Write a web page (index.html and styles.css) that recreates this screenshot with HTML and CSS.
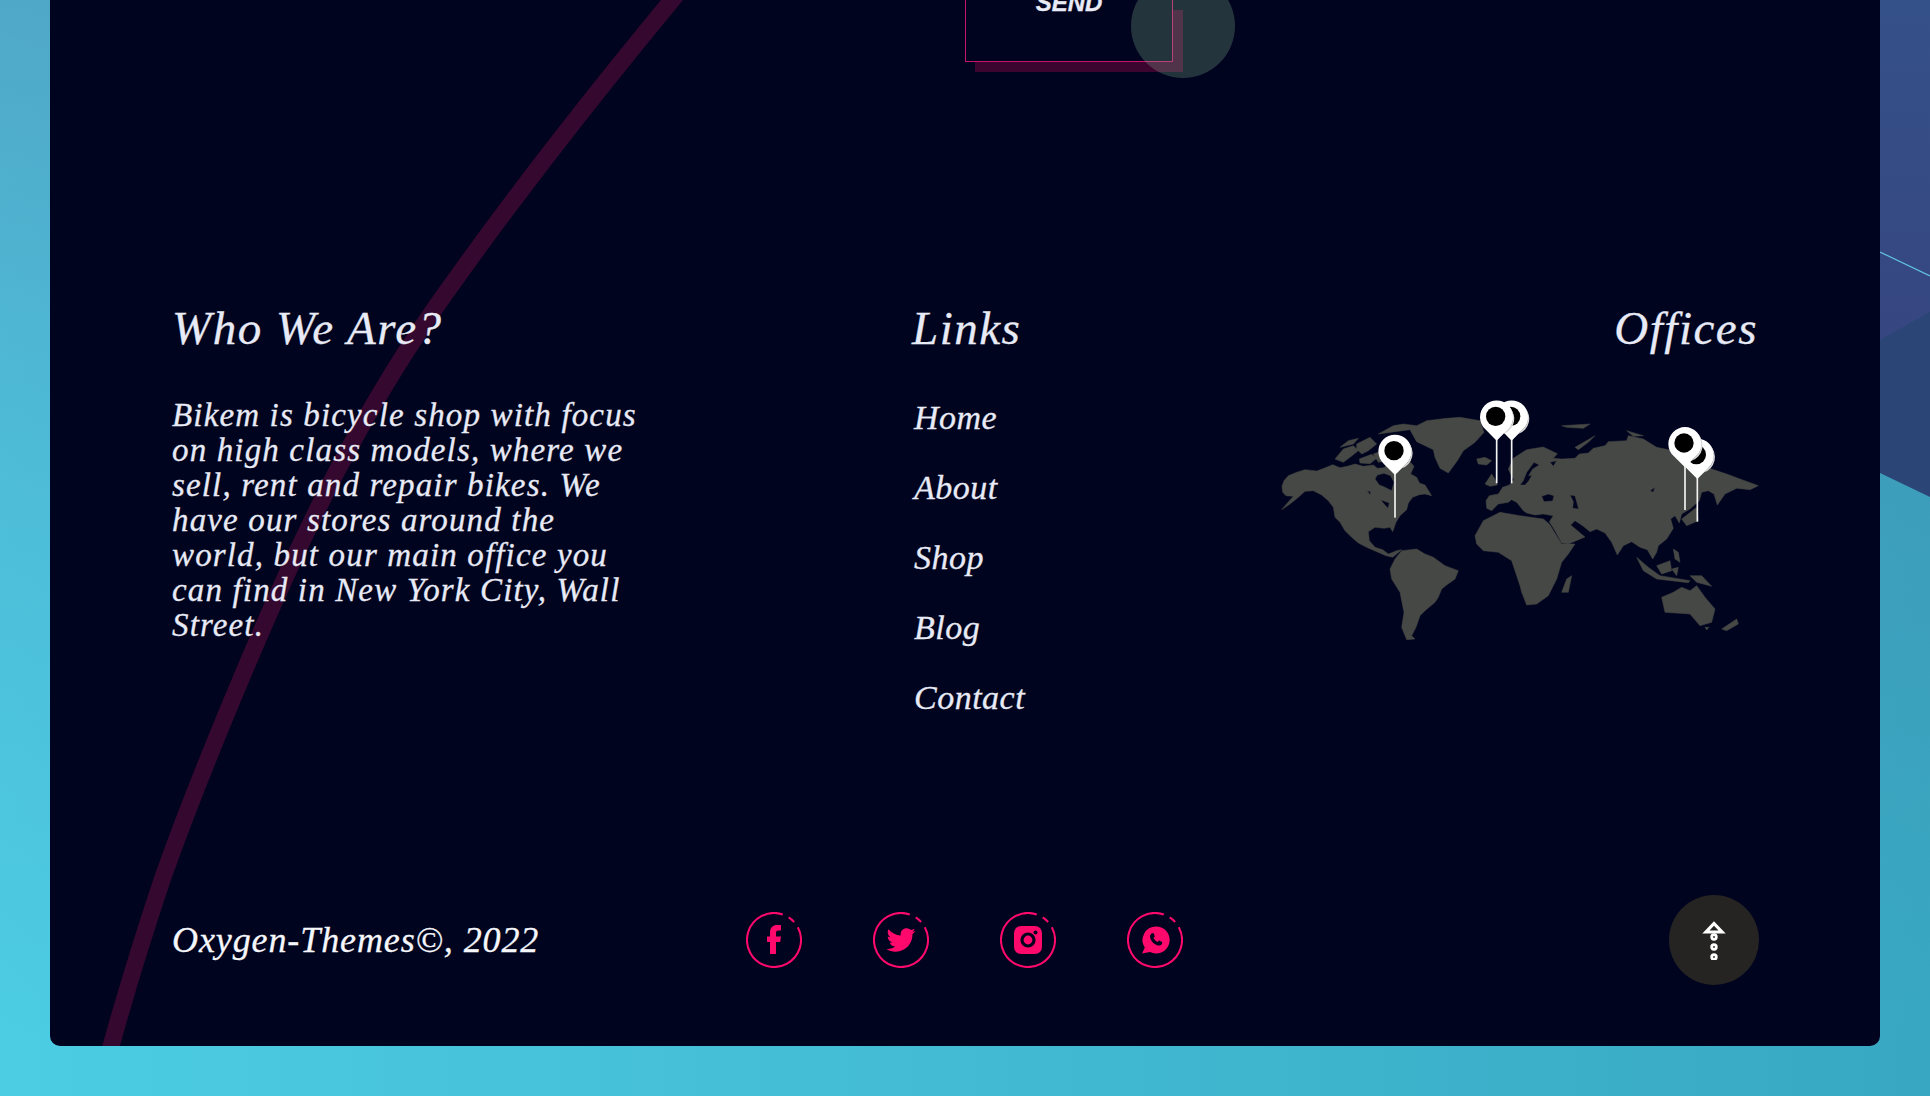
FILE: index.html
```html
<!DOCTYPE html>
<html lang="en">
<head>
<meta charset="utf-8">
<title>Bikem</title>
<link rel="stylesheet" href="styles.css">
</head>
<body>
<svg class="backdrop" viewBox="0 0 50 540" aria-hidden="true">
  <defs>
    <linearGradient id="sky" x1="0" y1="0" x2="0" y2="1">
      <stop offset="0" stop-color="#355189"/>
      <stop offset="1" stop-color="#364680"/>
    </linearGradient>
  </defs>
  <polygon points="0,0 50,0 50,340 0,340" fill="url(#sky)"/>
  <polygon points="0,340 50,312 50,497 0,473" fill="#2b4676"/>
  <line x1="0" y1="252" x2="50" y2="276" stroke="#62c4e4" stroke-width="1.2"/>
</svg>
<main class="card">
  <svg class="arc" viewBox="0 0 1830 1046" aria-hidden="true">
    <path d="M640 -22L622 0C560 75 480 175 405 280C310 410 250 540 199 660C165 740 135 815 112 880C92 940 75 995 60 1050" fill="none" stroke="#35092f" stroke-width="17"/>
  </svg>
  <div class="send-row">
    <button class="send" type="button"><span class="send-label">SEND</span><span class="send-ripple"></span></button>
  </div>
  <section class="columns">
    <div class="col-about">
      <h2 class="heading">Who We Are?</h2>
      <p class="about-text">Bikem is bicycle shop with focus<br>on high class models, where we<br>sell, rent and repair bikes. We<br>have our stores around the<br>world, but our main office you<br>can find in New York City, Wall<br>Street.</p>
    </div>
    <nav class="col-links">
      <h2 class="heading">Links</h2>
      <ul class="link-list">
        <li><a href="#">Home</a></li>
        <li><a href="#">About</a></li>
        <li><a href="#">Shop</a></li>
        <li><a href="#">Blog</a></li>
        <li><a href="#">Contact</a></li>
      </ul>
    </nav>
    <div class="col-offices">
      <h2 class="heading">Offices</h2>
      <svg class="map" viewBox="0 0 1560 840" role="img" aria-label="World map with office pins">
        <defs>
          <g id="pin">
            <rect x="-2.5" y="60" width="5" height="138" fill="#f2f2f2"/>
            <path d="M0 70L-34 36A50 50 0 1 1 34 36Z" fill="#fff"/>
            <path d="M38 -30A50 50 0 0 1 34 36L20 50A48 48 0 0 0 38 -30Z" fill="#d9d9d9"/>
            <circle cx="-3" cy="-3" r="29" fill="#000"/>
          </g>
        </defs>
        <g class="land">
          <path fill-rule="evenodd" d="M66 322L72 305L85 290L110 280L135 272L170 276L192 268L218 257L240 266L262 262L285 255L310 262L340 258L352 268L372 266L385 252L405 262L425 258L450 248L462 262L452 285L470 295L478 312L495 318L515 350L495 345L478 347L458 355L445 372L440 392L420 410L408 430L398 458L390 445L372 448L345 445L325 458L328 485L345 505L368 512L385 525L410 515L425 512L410 525L398 535L378 530L350 518L320 505L295 492L275 475L255 455L240 430L225 415L220 385L205 365L185 348L160 335L135 337L115 355L90 375L65 392L88 365L100 352L78 350L68 340ZM345 300L358 318L375 325L395 335L402 310L392 290L372 283L352 288ZM362 362L388 372L384 388L372 375ZM322 335L332 338L330 348Z"/>
          <path d="M425 515L470 510L495 525L520 535L555 560L595 575L585 600L560 618L545 630L535 655L525 670L495 695L480 710L468 745L455 770L465 780L440 782L425 745L432 700L425 665L420 640L395 600L390 570L405 540Z"/>
          <path d="M355 165L400 140L430 135L470 140L500 125L560 118L600 115L660 125L672 160L645 190L610 215L592 245L565 282L540 268L525 235L520 212L470 188L450 152L405 158Z"/>
          <path d="M225 240L250 210L280 200L295 215L270 235L250 250ZM290 195L330 175L350 195L325 215L305 225L290 210ZM298 240L335 226L350 238L330 254L300 252ZM340 225L375 212L400 225L450 245L420 254L385 246L355 250ZM240 205L265 185L295 178L280 195Z"/>
          <path d="M650 240L675 235L695 245L680 258L655 255ZM675 315L695 285L705 300L712 318L690 322Z"/>
          <path fill-rule="evenodd" d="M680 388L678 365L688 350L715 345L728 325L748 318L762 302L752 285L745 270L760 238L800 212L850 204L892 224L880 238L905 240L945 238L958 225L985 222L1000 208L1035 200L1045 188L1100 185L1105 170L1150 180L1190 205L1240 215L1285 232L1330 262L1400 285L1440 300L1495 320L1470 332L1430 328L1395 345L1372 378L1362 345L1345 335L1325 340L1318 365L1290 390L1265 405L1258 432L1245 410L1232 420L1240 448L1220 480L1195 500L1190 520L1178 540L1162 512L1140 505L1115 488L1090 500L1072 528L1055 490L1035 462L1010 450L990 458L968 440L945 425L932 438L975 474L925 495L905 492L885 455L868 428L880 410L850 405L825 408L800 402L790 395L770 370L755 362L745 370L715 375L695 395ZM845 352L865 345L882 350L878 366L852 368ZM930 348L945 350L956 390L938 388L940 368ZM822 250L800 280L790 305L780 318L795 318L806 306L816 288L806 290L818 270L838 258ZM870 250L890 245L880 262ZM1170 335L1185 325L1180 340Z"/>
          <path d="M645 470L670 425L720 400L780 410L850 420L868 435L905 495L945 495L925 525L905 550L890 600L865 650L830 675L800 678L785 640L780 620L755 545L715 520L670 515L650 495Z"/>
          <path d="M920 600L935 590L925 640L905 640Z"/>
          <path d="M1205 655L1240 640L1265 625L1290 635L1310 620L1335 655L1365 690L1355 730L1320 740L1290 705L1215 700Z"/>
          <path d="M1385 750L1430 720L1435 735L1400 755ZM1335 745L1347 745L1340 753Z"/>
          <path d="M1130 535L1165 565L1200 590L1290 605L1285 611L1190 600L1150 575ZM1190 560L1230 545L1235 575L1205 585ZM1240 510L1255 520L1260 550L1245 540ZM1290 590L1325 590L1355 622L1310 610ZM1235 570L1255 565L1250 590Z"/>
          <path d="M1265 420L1310 385L1315 425L1280 440ZM905 140L990 135L970 148L920 145ZM1100 155L1150 170L1120 172ZM945 205L1005 170L985 190L955 212Z"/>
        </g>
        <use href="#pin" x="405" y="218"/>
        <use href="#pin" x="755" y="115"/>
        <use href="#pin" x="710" y="115"/>
        <use href="#pin" x="1312" y="230"/>
        <use href="#pin" x="1275" y="195"/>
      </svg>
    </div>
  </section>
  <footer class="bottom">
    <p class="copyright">Oxygen-Themes©, 2022</p>
    <div class="socials">
      <a class="social" href="#" aria-label="Facebook">
        <svg viewBox="0 0 56 56"><circle class="ring" cx="28" cy="28" r="27" pathLength="360"/><path class="glyph" d="M24 42V30H21V24.500H24V20.500C24 15.500 27 13 31 13H35V18.500H32.500C30.700 18.500 30 19.300 30 21V24.500H35L34.200 30H30V42Z"/></svg>
      </a>
      <a class="social" href="#" aria-label="Twitter">
        <svg viewBox="0 0 56 56"><circle class="ring" cx="28" cy="28" r="27" pathLength="360"/><g transform="translate(13.500 13.500) scale(.0565)"><path class="glyph" d="M459.37 151.716c.325 4.548.325 9.097.325 13.645 0 138.72-105.583 298.558-298.558 298.558-59.452 0-114.68-17.219-161.137-47.106 8.447.974 16.568 1.299 25.34 1.299 49.055 0 94.213-16.568 130.274-44.832-46.132-.975-84.792-31.188-98.112-72.772 6.498.974 12.995 1.624 19.818 1.624 9.421 0 18.843-1.3 27.614-3.573-48.081-9.747-84.143-51.98-84.143-102.985v-1.299c13.969 7.797 30.214 12.67 47.431 13.319-28.264-18.843-46.781-51.005-46.781-87.391 0-19.492 5.197-37.36 14.294-52.954 51.655 63.675 129.3 105.258 216.365 109.807-1.624-7.797-2.599-15.918-2.599-24.04 0-57.828 46.782-104.934 104.934-104.934 30.213 0 57.502 12.67 76.67 33.137 23.715-4.548 46.456-13.32 66.599-25.34-7.798 24.366-24.366 44.833-46.132 57.827 21.117-2.273 41.584-8.122 60.426-16.243-14.292 20.791-32.161 39.308-52.628 54.253z"/></g></svg>
      </a>
      <a class="social" href="#" aria-label="Instagram">
        <svg viewBox="0 0 56 56"><circle class="ring" cx="28" cy="28" r="27" pathLength="360"/><rect class="glyph" x="14" y="14" width="28" height="28" rx="7"/><circle class="hole-ring" cx="28" cy="28" r="6"/><circle class="hole" cx="35.500" cy="20.500" r="2"/></svg>
      </a>
      <a class="social" href="#" aria-label="WhatsApp">
        <svg viewBox="0 0 56 56"><circle class="ring" cx="28" cy="28" r="27" pathLength="360"/><path class="glyph" d="M29 14.500A13.500 13.500 0 1 1 23 40L15 41.500L17.800 35.500A13.500 13.500 0 0 1 29 14.500Z"/><path class="hole" d="M24.500 21.500L26.500 21C27 22 27.800 24 27.800 24.500L26.500 26C27.300 27.700 28.800 29.200 30.500 30L32 28.600C32.700 28.800 34.500 29.700 35.300 30.300L34.800 32.300C33.700 33.800 31.500 34 29.500 33C26.500 31.700 24.200 29.200 23.300 26.300C22.700 24.300 23.200 22.500 24.500 21.500Z"/></svg>
      </a>
    </div>
    <a class="to-top" href="#" aria-label="Back to top">
      <svg viewBox="0 0 24 40" width="24" height="40"><path class="arrow" d="M12 3.500L20 12H4Z"/><circle class="dot" cx="12" cy="17" r="2.300"/><circle class="dot" cx="12" cy="27" r="2.300"/><circle class="dot" cx="12" cy="37" r="2.300"/></svg>
    </a>
  </footer>
</main>
</body>
</html>
```
FILE: styles.css
```css
* { box-sizing: border-box; }
html, body { margin: 0; height: 1096px; overflow: hidden; }
body {
  position: relative;
  background:
    linear-gradient(to bottom, rgba(88,99,148,.35) 0%, rgba(88,99,148,.15) 45%, rgba(88,99,148,0) 95%),
    linear-gradient(to right, #4ccde4 0%, #38a8c2 100%);
  font-family: "Liberation Serif", serif;
  font-style: italic;
  color: #e8eaf5;
  -webkit-text-stroke: .3px currentColor;
}
.backdrop { position: absolute; top: 0; left: 1880px; width: 50px; height: 540px; }
.card {
  position: relative;
  display: flex;
  flex-direction: column;
  width: 1830px;
  height: 1046px;
  margin-left: 50px;
  padding: 0 122px 61px;
  background: #00041f;
  border-radius: 0 0 10px 10px;
  overflow: hidden;
}
.arc { position: absolute; top: 0; left: 0; width: 1830px; height: 1046px; }
.send-row { position: relative; height: 62px; margin-left: 793px; }
.send {
  position: relative;
  display: flex;
  align-items: flex-start;
  justify-content: center;
  width: 208px;
  height: 62px;
  padding: 0;
  border: 1px solid #c4146c;
  border-top: 0;
  background: #00041f;
  box-shadow: 10px 10px 0 #3c0530;
  color: #e8eaf5;
}
.send-label {
  display: block;
  margin-top: -12px;
  font: italic 700 24px/30px "Liberation Sans", sans-serif;
}
.send-ripple {
  position: absolute;
  left: 165px;
  top: -26px;
  width: 104px;
  height: 104px;
  border-radius: 50%;
  background: rgba(150,205,160,.24);
}
.columns { position: relative; display: flex; margin-top: 236px; }
.col-about { width: 740px; }
.col-links { flex: 1; }
.col-offices { display: flex; flex-direction: column; align-items: flex-end; }
.heading { margin: 0; font-size: 47px; line-height: 60px; font-weight: 400; letter-spacing: 1.5px; }
.about-text { margin: 40px 0 0; font-size: 33px; line-height: 35px; white-space: nowrap; letter-spacing: 1.15px; }
.link-list { margin: 40px 0 0; padding: 0 0 0 2px; list-style: none; font-size: 34px; line-height: 40px; letter-spacing: .5px; }
.link-list li + li { margin-top: 30px; }
.link-list a { color: inherit; text-decoration: none; }
.map { display: block; width: 520px; height: 280px; margin: 21px -22px 0 0; }
.land { fill: #464845; stroke: #464845; stroke-width: 1.5; stroke-linejoin: round; }
.bottom { position: relative; display: grid; grid-template-columns: 574px 1fr auto; align-items: center; margin-top: auto; }
.copyright { margin: 0; font-size: 36px; line-height: 44px; color: #f6f7fb; letter-spacing: .9px; }
.socials { display: flex; gap: 71px; }
.social { display: block; width: 56px; height: 56px; }
.social svg { display: block; width: 56px; height: 56px; }
.ring {
  fill: none;
  stroke: #ff0a6c;
  stroke-width: 2;
  stroke-dasharray: 317 14 15 14;
  transform: rotate(-28deg);
  transform-origin: 28px 28px;
}
.glyph { fill: #ff0a6c; stroke: none; }
.hole { fill: #00041f; stroke: none; }
.hole-ring { fill: #ff0a6c; stroke: #00041f; stroke-width: 3.2; }
.to-top {
  display: flex;
  align-items: center;
  justify-content: center;
  width: 90px;
  height: 90px;
  margin-right: -1px;
  border-radius: 50%;
  background: #252422;
}
.arrow { fill: none; stroke: #fff; stroke-width: 3.2; }
.dot { fill: #252422; stroke: #fff; stroke-width: 2.800; }
```
